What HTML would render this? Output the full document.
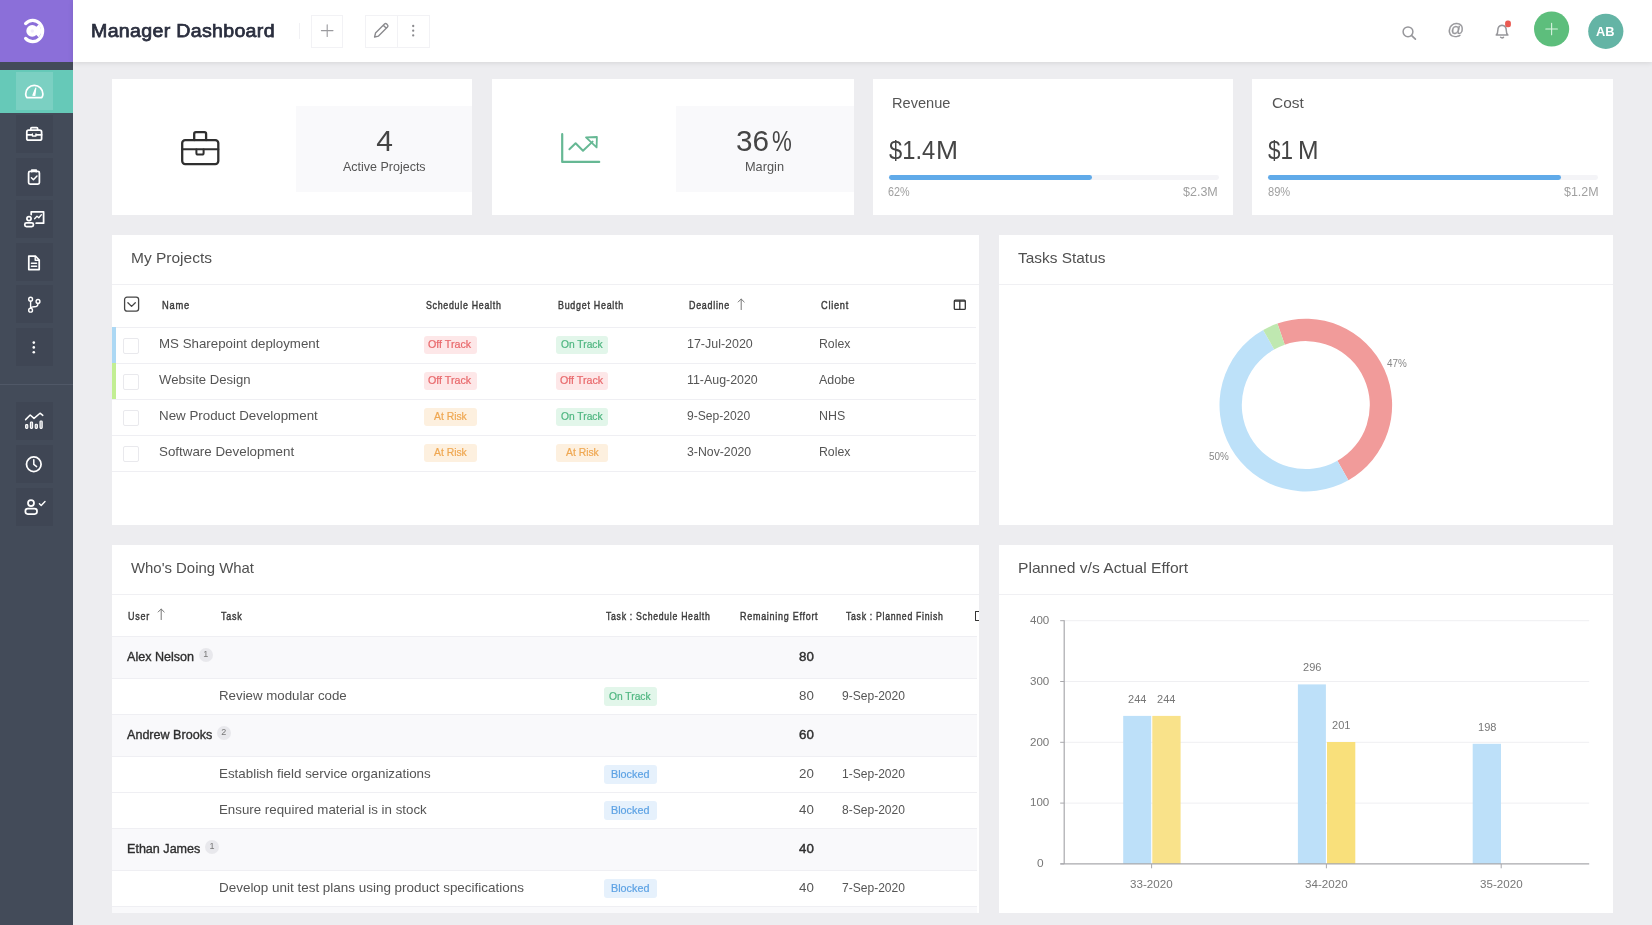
<!DOCTYPE html>
<html>
<head>
<meta charset="utf-8">
<title>Manager Dashboard</title>
<style>
*{box-sizing:border-box;margin:0;padding:0}
html,body{width:1652px;height:925px;overflow:hidden}
body{background:#ededf0;font-family:"Liberation Sans",sans-serif;position:relative}
.abs{position:absolute}
.t{position:absolute;white-space:nowrap;line-height:1;transform-origin:0 50%;display:block}
.side{position:absolute;left:0;top:0;width:73px;height:925px;background:#434b59}
.logo{position:absolute;left:0;top:0;width:73px;height:62px;background:#8b6fd9}
.active{position:absolute;left:0;top:70px;width:73px;height:43px;background:#66c9b8}
.sq{position:absolute;left:15.5px;width:37px;height:38px;background:rgba(0,0,0,.055)}
.hdr{position:absolute;left:73px;top:0;width:1579px;height:62px;background:#fff;box-shadow:0 1px 5px rgba(0,0,0,.10)}
.card{position:absolute;background:#fff}
.gbox{position:absolute;background:#f9f9fb}
.hl{position:absolute;height:1.4px;background:#efeff3}
.btn{position:absolute;border:1px solid #f2f2f5;background:#fff}
.cb{position:absolute;width:16px;height:16px;border:1px solid #e9e9ed;border-radius:2px;background:#fff}
.bd{position:absolute;height:18px;border-radius:3px}
.grp{position:absolute;left:112px;width:865px;background:#f9f9fb}
.cnt{position:absolute;width:14px;height:14px;border-radius:7px;background:#e8e8ec}
svg{position:absolute;overflow:visible;filter:blur(.3px)}
</style>
</head>
<body>

<!-- ============ SIDEBAR ============ -->
<div class="side">
  <div class="logo"></div>
  <div class="active"></div>
  <div class="sq" style="top:72px;background:rgba(255,255,255,.14)"></div>
<div class="sq" style="top:114.5px"></div>
<div class="sq" style="top:157.5px"></div>
<div class="sq" style="top:200px"></div>
<div class="sq" style="top:242.5px"></div>
<div class="sq" style="top:285px"></div>
<div class="sq" style="top:328px"></div>
<div class="sq" style="top:402px"></div>
<div class="sq" style="top:445px"></div>
<div class="sq" style="top:487.5px"></div>
<div class="abs" style="left:0;top:384px;width:73px;height:1px;background:#505867"></div>
<svg style="left:0;top:0" width="73" height="925" viewBox="0 0 73 925" fill="none" stroke="#fff" stroke-width="1.75" stroke-linecap="round" stroke-linejoin="round">
  <!-- logo -->
  <path d="M25.6 23.6A9.9 10.7 0 1 1 25.6 38.4" stroke-width="3.2"/>
  <g fill="#fff" stroke="none"><circle cx="32.2" cy="30.9" r="5.9"/><path d="M32.4 31L38.6 24.6A8.6 8.6 0 0 1 38.6 37.2Z"/><circle cx="32.3" cy="31" r="1.7" fill="#8b6fd9" fill-opacity=".13"/></g>
  <!-- gauge -->
  <path d="M26.8 97.6q-1.1-1.6-1.1-3.6a8.6 8.6 0 0 1 17.2 0q0 2-1.1 3.6z"/>
  <path d="M32.9 95.2l2.9-7.2 -1 7.4z" stroke-width="1.2" fill="#fff"/>
  <!-- briefcase -->
  <rect x="26.8" y="130.2" width="14.8" height="10" rx="1.8"/>
  <path d="M30.8 130.2v-1.6q0-1 1-1h4.8q1 0 1 1v1.6M26.8 134.8h5.4M36.2 134.8h5.4"/>
  <path d="M32.4 134v2h3.6v-2" stroke-width="1.3"/>
  <!-- clipboard -->
  <rect x="28.6" y="171.4" width="10.8" height="12.6" rx="1.5"/>
  <path d="M31.8 171.6v-1.4h4.4v1.4" stroke-width="1.8"/>
  <path d="M31.4 177.8l2 2 3.6-3.8" stroke-width="1.5"/>
  <!-- presentation -->
  <path d="M31.2 214.6v-2.8h12.4v11.4h-7.4" />
  <path d="M34.6 218.8l2.4-2.6 1.8 1.6 2.6-3" stroke-width="1.3"/>
  <circle cx="29" cy="218.6" r="2.1"/>
  <rect x="24.8" y="222.8" width="8.6" height="3.8" rx="1.6"/>
  <!-- document -->
  <path d="M28.8 256.2h6.6l3.8 3.8v9.6h-10.4z"/>
  <path d="M35.2 256.4v3.8h3.8M31.4 263.2h5.2M31.4 266.2h5.2" stroke-width="1.4"/>
  <!-- branch -->
  <circle cx="30.6" cy="299.2" r="1.9" stroke-width="1.4"/><circle cx="30.6" cy="310.2" r="1.9" stroke-width="1.4"/><circle cx="38" cy="301.4" r="1.9" stroke-width="1.4"/>
  <path d="M30.6 301.2v7M38 303.4q0 3.2-3.6 3.4-3.6 0.2-3.8 1.6" stroke-width="1.4"/>
  <!-- more -->
  <g fill="#fff" stroke="none"><circle cx="33.8" cy="342.6" r="1.3"/><circle cx="33.8" cy="347.4" r="1.3"/><circle cx="33.8" cy="352.2" r="1.3"/></g>
  <!-- analytics -->
  <path d="M25.6 419.6l4.6-4.6 3.8 3.4 6-5.2 2.8 2.2" stroke-width="1.5"/>
  <g stroke-width="1.1" fill="#fff" fill-opacity=".55"><rect x="25.6" y="424.6" width="2.2" height="3.8" rx="0.8"/><rect x="30.4" y="422" width="2.2" height="6.4" rx="0.8"/><rect x="35.2" y="424.2" width="2.2" height="4.2" rx="0.8"/><rect x="40" y="421" width="2.2" height="7.4" rx="0.8"/></g>
  <!-- clock -->
  <circle cx="33.8" cy="464.2" r="7.3"/>
  <path d="M33.8 459.8v4.6l2.8 2.2" stroke-width="1.5"/>
  <!-- user check -->
  <circle cx="31" cy="503" r="3"/>
  <rect x="25.4" y="508.6" width="11.6" height="5.4" rx="2.4"/>
  <path d="M39.4 503.8l1.8 1.8 3.8-4" stroke-width="1.4"/>
</svg>
</div>

<!-- ============ HEADER ============ -->
<div class="hdr"></div>

<div class="abs" style="left:299px;top:23px;width:1px;height:16px;background:#f1f1f4"></div>
<div class="btn" style="left:311px;top:14.6px;width:32px;height:33.2px"></div>
<div class="btn" style="left:364.6px;top:14.6px;width:65.8px;height:33.2px"></div>
<div class="abs" style="left:396.6px;top:15px;width:1px;height:32px;background:#f2f2f5"></div>
<svg style="left:0;top:0" width="1652" height="62" viewBox="0 0 1652 62" fill="none" stroke-linecap="round" stroke-linejoin="round">
  <!-- plus -->
  <path d="M327.2 24.8v11.6M321.4 30.6h11.6" stroke="#9a9a9e" stroke-width="1.1"/>
  <!-- pencil -->
  <path d="M374.6 37.0l0.9-3.9 9.0-9.0q1.1-1.0 2.2 0l0.8 0.8q1.0 1.1 0 2.2l-9.0 9.0zM383.3 25.3l3.0 3.0" stroke="#8a8a8e" stroke-width="1.4"/>
  <!-- dots -->
  <g fill="#8a8a8e" stroke="none"><circle cx="413.2" cy="26" r="1.15"/><circle cx="413.2" cy="30.7" r="1.15"/><circle cx="413.2" cy="35.4" r="1.15"/></g>
  <!-- search -->
  <circle cx="1408" cy="31.8" r="4.9" stroke="#97979b" stroke-width="1.5"/>
  <path d="M1411.7 35.6l3.7 3.6" stroke="#97979b" stroke-width="1.7"/>
  <!-- bell -->
  <path d="M1496.2 35.1q1.6-1.4 1.6-4.6 0-4.7 4.2-5.2 4.3 0.5 4.3 5.2 0 3.2 1.6 4.6zM1500.6 37.3q1.4 1.2 2.9 0" stroke="#97979b" stroke-width="1.5"/>
  <rect x="1505.1" y="20.6" width="5.8" height="6.6" rx="2.5" fill="#ea5a52" stroke="none"/>
  <!-- add button -->
  <circle cx="1551.6" cy="29.0" r="17.6" fill="#5dbe7c" stroke="none"/>
  <path d="M1551.6 23.2v11.6M1545.8 29.0h11.6" stroke="#d8f3e0" stroke-width="1.1"/>
  <!-- avatar -->
  <circle cx="1605.8" cy="31.3" r="17.6" fill="#64b4a5" stroke="none"/>
</svg>


<!-- ============ KPI CARDS ============ -->
<div class="card" style="left:112px;top:79px;width:360px;height:135.5px"></div>
<div class="gbox" style="left:296px;top:106.3px;width:176px;height:85.6px"></div>
<div class="card" style="left:492px;top:79px;width:361.5px;height:135.5px"></div>
<div class="gbox" style="left:675.5px;top:106.3px;width:178px;height:85.6px"></div>
<div class="card" style="left:872.5px;top:79px;width:360px;height:135.5px"></div>
<div class="card" style="left:1252px;top:79px;width:361.3px;height:135.5px"></div>

<!-- briefcase icon -->
<svg style="left:178px;top:129px" width="44" height="40" viewBox="178 129 44 40" fill="none" stroke="#2f2f2f" stroke-width="2.3" stroke-linejoin="round" stroke-linecap="round">
  <rect x="182.2" y="140.1" width="36.1" height="24" rx="3"/>
  <path d="M194.2 140.1v-6.2q0-1.7 1.7-1.7h8.5q1.7 0 1.7 1.7v6.2"/>
  <path d="M182.2 149.3h36.1" stroke-width="2"/>
  <path d="M196.4 149.6v3.4q0 1.6 1.6 1.6h4q1.6 0 1.6-1.6v-3.4" stroke-width="2"/>
</svg>
<!-- trend icon -->
<svg style="left:558px;top:131px" width="46" height="36" viewBox="558 131 46 36" fill="none" stroke="#66b894" stroke-width="2.2" stroke-linejoin="round" stroke-linecap="round">
  <path d="M562.2 134.2v27.7h37"/>
  <path d="M569.4 149.3l6.2-6.1 7.4 7.6 9.6-9.2" stroke-width="2"/>
  <path d="M586 137.3l10.9-0.3-0.3 10.4z" stroke-width="1.8"/>
</svg>
<!-- progress bars -->
<div class="abs" style="left:888.5px;top:175px;width:330px;height:4.7px;background:#f4f4f7;border-radius:2.4px"></div>
<div class="abs" style="left:888.5px;top:175px;width:203.6px;height:4.7px;background:#60aae9;border-radius:2.4px"></div>
<div class="abs" style="left:1268px;top:175px;width:329.5px;height:4.7px;background:#f4f4f7;border-radius:2.4px"></div>
<div class="abs" style="left:1268px;top:175px;width:293.4px;height:4.7px;background:#60aae9;border-radius:2.4px"></div>


<!-- ============ MY PROJECTS ============ -->
<div class="card" style="left:112px;top:234.7px;width:866.6px;height:290.7px"></div>
<div class="hl" style="left:112px;top:284px;width:866.6px;background:#f0f0f3"></div>
<svg style="left:123px;top:296px" width="18" height="18" viewBox="0 0 18 18" fill="none" stroke="#454545" stroke-width="1.3" stroke-linecap="round" stroke-linejoin="round">
<rect x="1.6" y="1.2" width="14" height="14" rx="2.4"/><path d="M4.9 6.7l3.7 3.7 3.7-3.7"/></svg>
<svg style="left:736px;top:298px" width="10" height="13" viewBox="0 0 10 13" fill="none" stroke="#777" stroke-width="1" stroke-linecap="round" stroke-linejoin="round">
<path d="M5.2 11.6V1.2M2.2 4.0l3-3 3 3"/></svg>
<svg style="left:953px;top:299px" width="14" height="12" viewBox="0 0 14 12" fill="none" stroke="#333" stroke-width="1.3" stroke-linejoin="round">
<rect x="1.3" y="1.2" width="11" height="9.2" rx="1"/><path d="M6.8 1.2v9.2M1.3 2.2h11" /></svg>
<div class="hl" style="left:112px;top:326.6px;width:864px"></div>
<div class="hl" style="left:112px;top:362.6px;width:864px"></div>
<div class="hl" style="left:112px;top:398.6px;width:864px"></div>
<div class="hl" style="left:112px;top:434.6px;width:864px"></div>
<div class="hl" style="left:112px;top:470.6px;width:864px"></div>
<div class="abs" style="left:112px;top:327px;width:3.6px;height:35.5px;background:#acd8f4"></div>
<div class="abs" style="left:112px;top:363px;width:3.6px;height:35.5px;background:#c2ee93"></div>
<div class="cb" style="left:122.8px;top:337.8px"></div>
<div class="bd" style="left:424.2px;top:335.6px;width:52.4px;height:18.2px;background:#fde7e8"></div>
<div class="bd" style="left:556.3px;top:335.6px;width:52.2px;height:18.2px;background:#e2f6ea"></div>
<div class="cb" style="left:122.8px;top:373.8px"></div>
<div class="bd" style="left:424.2px;top:371.6px;width:52.4px;height:18.2px;background:#fde7e8"></div>
<div class="bd" style="left:556.3px;top:371.6px;width:52.2px;height:18.2px;background:#fde7e8"></div>
<div class="cb" style="left:122.8px;top:409.8px"></div>
<div class="bd" style="left:424.2px;top:407.6px;width:52.4px;height:18.2px;background:#fdf0df"></div>
<div class="bd" style="left:556.3px;top:407.6px;width:52.2px;height:18.2px;background:#e2f6ea"></div>
<div class="cb" style="left:122.8px;top:445.8px"></div>
<div class="bd" style="left:424.2px;top:443.6px;width:52.4px;height:18.2px;background:#fdf0df"></div>
<div class="bd" style="left:556.3px;top:443.6px;width:52.2px;height:18.2px;background:#fdf0df"></div>

<!-- ============ TASKS STATUS ============ -->
<div class="card" style="left:998.7px;top:234.7px;width:614.6px;height:290.7px"></div>
<div class="hl" style="left:998.7px;top:284px;width:614.6px;background:#f0f0f3"></div>
<svg style="left:0;top:0" width="1652" height="925" viewBox="0 0 1652 925">
<path d="M1277.42 323.60A86.3 86.3 0 0 1 1348.43 480.14L1337.41 460.75A64.0 64.0 0 0 0 1284.75 344.66Z" fill="#f19b9a"/>
<path d="M1348.43 480.14A86.3 86.3 0 0 1 1263.17 330.06L1274.19 349.45A64.0 64.0 0 0 0 1337.41 460.75Z" fill="#bde1f9"/>
<path d="M1263.17 330.06A86.3 86.3 0 0 1 1277.42 323.60L1284.75 344.66A64.0 64.0 0 0 0 1274.19 349.45Z" fill="#bfe8b0"/>
</svg>

<!-- ============ WHO'S DOING WHAT ============ -->
<div class="card" style="left:112px;top:544.7px;width:866.6px;height:368.6px;overflow:hidden" id="who"></div>
<div class="hl" style="left:112px;top:594px;width:866.6px;background:#f0f0f3"></div>
<svg style="left:156px;top:608px" width="10" height="13" viewBox="0 0 10 13" fill="none" stroke="#777" stroke-width="1" stroke-linecap="round" stroke-linejoin="round">
<path d="M5.2 11.6V1.2M2.2 4.0l3-3 3 3"/></svg>
<div class="abs" style="left:975px;top:611.4px;width:3.6px;height:9.6px;border:1.3px solid #333;border-right:none;border-radius:1px 0 0 1px"></div>
<div class="grp" style="top:636.5px;height:42.0px"></div>
<div class="grp" style="top:714.5px;height:42.0px"></div>
<div class="grp" style="top:828.5px;height:42.0px"></div>
<div class="grp" style="top:906.5px;height:6.7999999999999545px"></div>
<div class="hl" style="left:112px;top:636.0px;width:865px"></div>
<div class="hl" style="left:112px;top:678.0px;width:865px"></div>
<div class="hl" style="left:112px;top:714.0px;width:865px"></div>
<div class="hl" style="left:112px;top:756.0px;width:865px"></div>
<div class="hl" style="left:112px;top:792.0px;width:865px"></div>
<div class="hl" style="left:112px;top:828.0px;width:865px"></div>
<div class="hl" style="left:112px;top:870.0px;width:865px"></div>
<div class="hl" style="left:112px;top:906.0px;width:865px"></div>
<div class="cnt" style="left:198.7px;top:647.8px"></div>
<div class="cnt" style="left:216.7px;top:725.8px"></div>
<div class="cnt" style="left:204.7px;top:839.8px"></div>
<div class="bd" style="left:603.9px;top:687.3px;width:53px;height:18.6px;background:#e2f6ea"></div>
<div class="bd" style="left:603.9px;top:765.3px;width:53px;height:18.6px;background:#e6f1fc"></div>
<div class="bd" style="left:603.9px;top:801.3px;width:53px;height:18.6px;background:#e6f1fc"></div>
<div class="bd" style="left:603.9px;top:879.3px;width:53px;height:18.6px;background:#e6f1fc"></div>

<!-- ============ PLANNED V/S ACTUAL ============ -->
<div class="card" style="left:998.7px;top:544.7px;width:614.6px;height:368.6px"></div>
<div class="hl" style="left:998.7px;top:594px;width:614.6px;background:#f0f0f3"></div>
<svg style="left:0;top:0" width="1652" height="925" viewBox="0 0 1652 925" shape-rendering="auto">
<path d="M1064 803.1H1589.2" stroke="#efeff2" stroke-width="1"/>
<path d="M1064 742.3H1589.2" stroke="#efeff2" stroke-width="1"/>
<path d="M1064 681.5H1589.2" stroke="#efeff2" stroke-width="1"/>
<path d="M1064 620.7H1589.2" stroke="#efeff2" stroke-width="1"/>
<rect x="1123.2" y="715.9" width="28.0" height="148.0" fill="#bde0f9"/>
<rect x="1152.3" y="715.9" width="28.3" height="148.0" fill="#f9e28a"/>
<rect x="1297.9" y="684.4" width="28.0" height="179.5" fill="#bde0f9"/>
<rect x="1327.0" y="742.0" width="28.3" height="121.9" fill="#f9e07b"/>
<rect x="1472.7" y="743.8" width="28.3" height="120.1" fill="#bde0f9"/>
<path d="M1064.2 620.2V863.9" stroke="#a9a9ad" stroke-width="1.2"/>
<path d="M1060.4 863.9H1589.2" stroke="#a9a9ad" stroke-width="1.4"/>
<path d="M1060.2 863.9H1064.2" stroke="#a9a9ad" stroke-width="1"/>
<path d="M1060.2 803.1H1064.2" stroke="#a9a9ad" stroke-width="1"/>
<path d="M1060.2 742.3H1064.2" stroke="#a9a9ad" stroke-width="1"/>
<path d="M1060.2 681.5H1064.2" stroke="#a9a9ad" stroke-width="1"/>
<path d="M1060.2 620.7H1064.2" stroke="#a9a9ad" stroke-width="1"/>
<path d="M1151.6 863.9V868.3" stroke="#a9a9ad" stroke-width="1"/>
<path d="M1326.4 863.9V868.3" stroke="#a9a9ad" stroke-width="1"/>
<path d="M1501.2 863.9V868.3" stroke="#a9a9ad" stroke-width="1"/>
</svg>

<!-- ============ TEXT ============ -->
<div id="txt" style="position:absolute;left:0;top:0;width:1652px;height:925px;filter:blur(0.3px)">
<span class="t" style="left:90.6px;top:21.2px;font-size:19px;color:#2a2e3e;letter-spacing:0.3px;-webkit-text-stroke:0.75px #2a2e3e;transform:scaleX(1.031);">Manager Dashboard</span>
<span class="t" style="left:1596.3px;top:25.5px;font-size:12px;color:#ffffff;font-weight:700;transform:scaleX(1.067);">AB</span>
<span class="t" style="left:1447.6px;top:20.6px;font-size:16.5px;color:#97979b;-webkit-text-stroke:0.3px #97979b;">@</span>
<span class="t" style="left:376.3px;top:125.6px;font-size:30px;color:#454545;">4</span>
<span class="t" style="left:343.3px;top:159.5px;font-size:13px;color:#555;transform:scaleX(0.961);">Active Projects</span>
<span class="t" style="left:735.8px;top:125.6px;font-size:30px;color:#454545;transform:scaleX(0.989);">36</span>
<span class="t" style="left:772.4px;top:125.6px;font-size:30px;color:#454545;transform:scaleX(0.742);">%</span>
<span class="t" style="left:745.2px;top:159.7px;font-size:13px;color:#555;transform:scaleX(0.981);">Margin</span>
<span class="t" style="left:891.6px;top:94.8px;font-size:15px;color:#555;transform:scaleX(0.973);">Revenue</span>
<span class="t" style="left:888.6px;top:137.2px;font-size:26px;color:#454545;transform:scaleX(0.913);">$1.4</span>
<span class="t" style="left:935.8px;top:137.2px;font-size:26px;color:#454545;transform:scaleX(1.016);">M</span>
<span class="t" style="left:887.9px;top:185.6px;font-size:12px;color:#a0a0a0;transform:scaleX(0.899);">62%</span>
<span class="t" style="left:1183.4px;top:185.6px;font-size:12px;color:#a0a0a0;transform:scaleX(1.043);">$2.3M</span>
<span class="t" style="left:1271.6px;top:94.8px;font-size:15px;color:#555;transform:scaleX(1.031);">Cost</span>
<span class="t" style="left:1268.0px;top:137.4px;font-size:26px;color:#454545;transform:scaleX(0.864);">$1</span>
<span class="t" style="left:1297.8px;top:137.4px;font-size:26px;color:#454545;transform:scaleX(0.947);">M</span>
<span class="t" style="left:1267.6px;top:185.6px;font-size:12px;color:#a0a0a0;transform:scaleX(0.924);">89%</span>
<span class="t" style="left:1563.6px;top:185.6px;font-size:12px;color:#a0a0a0;transform:scaleX(1.037);">$1.2M</span>
<span class="t" style="left:130.7px;top:250.1px;font-size:15px;color:#505050;transform:scaleX(1.034);">My Projects</span>
<span class="t" style="left:1018.4px;top:249.9px;font-size:15px;color:#505050;transform:scaleX(1.028);">Tasks Status</span>
<span class="t" style="left:130.6px;top:560.2px;font-size:15px;color:#505050;transform:scaleX(0.994);">Who's Doing What</span>
<span class="t" style="left:1017.8px;top:560.1px;font-size:15px;color:#505050;transform:scaleX(1.043);">Planned v/s Actual Effort</span>
<span class="t" style="left:161.7px;top:299.9px;font-size:11px;color:#3b3b3b;letter-spacing:0.9px;-webkit-text-stroke:0.42px #3b3b3b;transform:scaleX(0.849);">Name</span>
<span class="t" style="left:425.7px;top:299.9px;font-size:11px;color:#3b3b3b;letter-spacing:0.9px;-webkit-text-stroke:0.42px #3b3b3b;transform:scaleX(0.802);">Schedule Health</span>
<span class="t" style="left:557.6px;top:299.9px;font-size:11px;color:#3b3b3b;letter-spacing:0.9px;-webkit-text-stroke:0.42px #3b3b3b;transform:scaleX(0.810);">Budget Health</span>
<span class="t" style="left:689.3px;top:299.9px;font-size:11px;color:#3b3b3b;letter-spacing:0.9px;-webkit-text-stroke:0.42px #3b3b3b;transform:scaleX(0.809);">Deadline</span>
<span class="t" style="left:821.3px;top:299.9px;font-size:11px;color:#3b3b3b;letter-spacing:0.9px;-webkit-text-stroke:0.42px #3b3b3b;transform:scaleX(0.834);">Client</span>
<span class="t" style="left:159.2px;top:337.1px;font-size:13px;color:#555;transform:scaleX(1.023);">MS Sharepoint deployment</span>
<span class="t" style="left:687.3px;top:337.1px;font-size:13px;color:#555;transform:scaleX(0.958);">17-Jul-2020</span>
<span class="t" style="left:818.7px;top:337.1px;font-size:13px;color:#555;transform:scaleX(0.945);">Rolex</span>
<span class="t" style="left:159.2px;top:373.1px;font-size:13px;color:#555;transform:scaleX(1.009);">Website Design</span>
<span class="t" style="left:687.3px;top:373.1px;font-size:13px;color:#555;transform:scaleX(0.953);">11-Aug-2020</span>
<span class="t" style="left:818.7px;top:373.1px;font-size:13px;color:#555;transform:scaleX(0.955);">Adobe</span>
<span class="t" style="left:159.2px;top:409.1px;font-size:13px;color:#555;transform:scaleX(1.027);">New Product Development</span>
<span class="t" style="left:687.3px;top:409.1px;font-size:13px;color:#555;transform:scaleX(0.930);">9-Sep-2020</span>
<span class="t" style="left:818.7px;top:409.1px;font-size:13px;color:#555;transform:scaleX(0.955);">NHS</span>
<span class="t" style="left:159.2px;top:445.1px;font-size:13px;color:#555;transform:scaleX(1.028);">Software Development</span>
<span class="t" style="left:687.3px;top:445.1px;font-size:13px;color:#555;transform:scaleX(0.945);">3-Nov-2020</span>
<span class="t" style="left:818.7px;top:445.1px;font-size:13px;color:#555;transform:scaleX(0.945);">Rolex</span>
<span class="t" style="left:428.3px;top:339.3px;font-size:10.5px;color:#e8696c;-webkit-text-stroke:0.22px #e8696c;transform:scaleX(1.019);">Off Track</span>
<span class="t" style="left:561.2px;top:339.3px;font-size:10.5px;color:#4fb680;-webkit-text-stroke:0.22px #4fb680;transform:scaleX(0.977);">On Track</span>
<span class="t" style="left:428.3px;top:375.3px;font-size:10.5px;color:#e8696c;-webkit-text-stroke:0.22px #e8696c;transform:scaleX(1.019);">Off Track</span>
<span class="t" style="left:560.4px;top:375.3px;font-size:10.5px;color:#e8696c;-webkit-text-stroke:0.22px #e8696c;transform:scaleX(1.019);">Off Track</span>
<span class="t" style="left:433.8px;top:411.3px;font-size:10.5px;color:#efa853;-webkit-text-stroke:0.22px #efa853;transform:scaleX(0.986);">At Risk</span>
<span class="t" style="left:561.2px;top:411.3px;font-size:10.5px;color:#4fb680;-webkit-text-stroke:0.22px #4fb680;transform:scaleX(0.977);">On Track</span>
<span class="t" style="left:433.8px;top:447.3px;font-size:10.5px;color:#efa853;-webkit-text-stroke:0.22px #efa853;transform:scaleX(0.986);">At Risk</span>
<span class="t" style="left:565.9px;top:447.3px;font-size:10.5px;color:#efa853;-webkit-text-stroke:0.22px #efa853;transform:scaleX(0.986);">At Risk</span>
<span class="t" style="left:1387.3px;top:358.5px;font-size:10px;color:#888;transform:scaleX(0.989);">47%</span>
<span class="t" style="left:1208.9px;top:451.5px;font-size:10px;color:#888;transform:scaleX(0.989);">50%</span>
<span class="t" style="left:128.3px;top:610.8px;font-size:11px;color:#3b3b3b;letter-spacing:0.9px;-webkit-text-stroke:0.42px #3b3b3b;transform:scaleX(0.818);">User</span>
<span class="t" style="left:220.8px;top:610.8px;font-size:11px;color:#3b3b3b;letter-spacing:0.9px;-webkit-text-stroke:0.42px #3b3b3b;transform:scaleX(0.818);">Task</span>
<span class="t" style="left:605.5px;top:610.8px;font-size:11px;color:#3b3b3b;letter-spacing:0.9px;-webkit-text-stroke:0.42px #3b3b3b;transform:scaleX(0.790);">Task : Schedule Health</span>
<span class="t" style="left:740.4px;top:610.8px;font-size:11px;color:#3b3b3b;letter-spacing:0.9px;-webkit-text-stroke:0.42px #3b3b3b;transform:scaleX(0.815);">Remaining Effort</span>
<span class="t" style="left:846.1px;top:610.8px;font-size:11px;color:#3b3b3b;letter-spacing:0.9px;-webkit-text-stroke:0.42px #3b3b3b;transform:scaleX(0.790);">Task : Planned Finish</span>
<span class="t" style="left:127.2px;top:650.2px;font-size:13px;color:#2e2e2e;-webkit-text-stroke:0.36px #2e2e2e;transform:scaleX(0.966);">Alex Nelson</span>
<span class="t" style="left:203.2px;top:650.1px;font-size:9px;color:#777;">1</span>
<span class="t" style="left:798.8px;top:650.2px;font-size:13px;color:#2e2e2e;-webkit-text-stroke:0.4px #2e2e2e;transform:scaleX(1.024);">80</span>
<span class="t" style="left:127.2px;top:728.1px;font-size:13px;color:#2e2e2e;-webkit-text-stroke:0.36px #2e2e2e;transform:scaleX(0.967);">Andrew Brooks</span>
<span class="t" style="left:221.3px;top:728.0px;font-size:9px;color:#777;">2</span>
<span class="t" style="left:798.8px;top:728.1px;font-size:13px;color:#2e2e2e;-webkit-text-stroke:0.4px #2e2e2e;transform:scaleX(1.024);">60</span>
<span class="t" style="left:127.2px;top:842.0px;font-size:13px;color:#2e2e2e;-webkit-text-stroke:0.36px #2e2e2e;transform:scaleX(0.967);">Ethan James</span>
<span class="t" style="left:209.4px;top:841.9px;font-size:9px;color:#777;">1</span>
<span class="t" style="left:798.8px;top:842.0px;font-size:13px;color:#2e2e2e;-webkit-text-stroke:0.4px #2e2e2e;transform:scaleX(1.024);">40</span>
<span class="t" style="left:218.6px;top:688.8px;font-size:13px;color:#555;transform:scaleX(1.022);">Review modular code</span>
<span class="t" style="left:798.8px;top:688.8px;font-size:13px;color:#555;transform:scaleX(1.024);">80</span>
<span class="t" style="left:842.4px;top:688.8px;font-size:13px;color:#555;transform:scaleX(0.927);">9-Sep-2020</span>
<span class="t" style="left:608.8px;top:690.8px;font-size:10.5px;color:#4fb680;-webkit-text-stroke:0.22px #4fb680;transform:scaleX(0.977);">On Track</span>
<span class="t" style="left:218.6px;top:766.8px;font-size:13px;color:#555;transform:scaleX(1.028);">Establish field service organizations</span>
<span class="t" style="left:798.8px;top:766.8px;font-size:13px;color:#555;transform:scaleX(1.024);">20</span>
<span class="t" style="left:842.4px;top:766.8px;font-size:13px;color:#555;transform:scaleX(0.927);">1-Sep-2020</span>
<span class="t" style="left:610.7px;top:768.8px;font-size:10.5px;color:#5fa3e4;-webkit-text-stroke:0.22px #5fa3e4;transform:scaleX(1.028);">Blocked</span>
<span class="t" style="left:218.6px;top:802.9px;font-size:13px;color:#555;transform:scaleX(1.023);">Ensure required material is in stock</span>
<span class="t" style="left:798.8px;top:802.9px;font-size:13px;color:#555;transform:scaleX(1.024);">40</span>
<span class="t" style="left:842.4px;top:802.9px;font-size:13px;color:#555;transform:scaleX(0.927);">8-Sep-2020</span>
<span class="t" style="left:610.7px;top:804.9px;font-size:10.5px;color:#5fa3e4;-webkit-text-stroke:0.22px #5fa3e4;transform:scaleX(1.028);">Blocked</span>
<span class="t" style="left:218.6px;top:880.8px;font-size:13px;color:#555;transform:scaleX(1.034);">Develop unit test plans using product specifications</span>
<span class="t" style="left:798.8px;top:880.8px;font-size:13px;color:#555;transform:scaleX(1.024);">40</span>
<span class="t" style="left:842.4px;top:880.8px;font-size:13px;color:#555;transform:scaleX(0.927);">7-Sep-2020</span>
<span class="t" style="left:610.7px;top:882.8px;font-size:10.5px;color:#5fa3e4;-webkit-text-stroke:0.22px #5fa3e4;transform:scaleX(1.028);">Blocked</span>
<span class="t" style="left:1030.1px;top:615.0px;font-size:11px;color:#777;transform:scaleX(1.052);">400</span>
<span class="t" style="left:1030.1px;top:675.8px;font-size:11px;color:#777;transform:scaleX(1.052);">300</span>
<span class="t" style="left:1030.1px;top:736.6px;font-size:11px;color:#777;transform:scaleX(1.052);">200</span>
<span class="t" style="left:1030.1px;top:797.4px;font-size:11px;color:#777;transform:scaleX(1.052);">100</span>
<span class="t" style="left:1036.5px;top:858.2px;font-size:11px;color:#777;transform:scaleX(1.079);">0</span>
<span class="t" style="left:1129.9px;top:879.0px;font-size:11px;color:#777;transform:scaleX(1.055);">33-2020</span>
<span class="t" style="left:1304.7px;top:879.0px;font-size:11px;color:#777;transform:scaleX(1.055);">34-2020</span>
<span class="t" style="left:1479.5px;top:879.0px;font-size:11px;color:#777;transform:scaleX(1.055);">35-2020</span>
<span class="t" style="left:1128.3px;top:694.5px;font-size:10px;color:#777;transform:scaleX(1.103);">244</span>
<span class="t" style="left:1157.2px;top:694.5px;font-size:10px;color:#777;transform:scaleX(1.103);">244</span>
<span class="t" style="left:1302.8px;top:663.3px;font-size:10px;color:#777;transform:scaleX(1.103);">296</span>
<span class="t" style="left:1331.6px;top:720.9px;font-size:10px;color:#777;transform:scaleX(1.103);">201</span>
<span class="t" style="left:1477.6px;top:722.6px;font-size:10px;color:#777;transform:scaleX(1.103);">198</span>
</div>

</body>
</html>
